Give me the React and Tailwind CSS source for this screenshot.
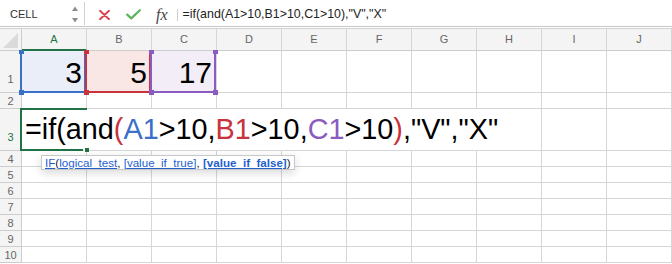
import React from 'react';

const COLS = ['A', 'B', 'C', 'D', 'E', 'F', 'G', 'H', 'I', 'J'];
const GRID = 'border-[#d6d6d6]';

function RowHeader({ n, tall, active }) {
  return (
    <div
      className={`flex w-[22px] shrink-0 justify-center border-r border-b border-[#cdcdcd] bg-[#f4f4f4] text-[11px] leading-[12px] ${
        tall ? 'items-end pb-[7px]' : 'items-center'
      } ${active ? 'text-[#217346]' : 'text-[#666]'}`}
    >
      {n}
    </div>
  );
}

function EmptyCell() {
  return <div className={`w-[65px] shrink-0 border-r border-b ${GRID}`} />;
}

function PlainRow({ n }) {
  return (
    <div className="flex h-[16px] shrink-0">
      <RowHeader n={n} />
      {COLS.map((c) => (
        <EmptyCell key={c} />
      ))}
    </div>
  );
}

/**
 * Coloured reference range on a value cell (A1 / B1 / C1)
 */
function RangeCell({ value, fill, color, rightCorners }) {
  return (
    <div
      className={`relative flex w-[65px] shrink-0 items-end justify-end border-r border-b ${GRID} ${fill} pr-[4px] pb-[4px] text-[30px] leading-none text-black`}
    >
      {value}
      {/* outline */}
      <div
        className={`pointer-events-none absolute -left-[2px] top-0 right-0 -bottom-[1px] border-x-2 border-b-2 ${color.border}`}
      />
      {/* handles */}
      <div className={`absolute -left-[3px] -top-[1px] h-[4px] w-[5px] ${color.bg}`} />
      <div className={`absolute -left-[3px] -bottom-[3px] h-[5px] w-[5px] ${color.bg}`} />
      {rightCorners && (
        <>
          <div className={`absolute -right-[2px] -top-[1px] h-[4px] w-[5px] ${color.bg}`} />
          <div className={`absolute -right-[2px] -bottom-[3px] h-[5px] w-[5px] ${color.bg}`} />
        </>
      )}
    </div>
  );
}

const BLUE = { border: 'border-[#3a70c8]', bg: 'bg-[#3a70c8]', text: 'text-[#3a70c8]' };
const RED = { border: 'border-[#c8333d]', bg: 'bg-[#c8333d]', text: 'text-[#c8333d]' };
const PURPLE = { border: 'border-[#8b5bc0]', bg: 'bg-[#8b5bc0]', text: 'text-[#8b5bc0]' };

function FormulaBar() {
  return (
    <div className="flex h-[27px] shrink-0 items-center border-b border-[#c6c6c6] bg-white pt-[3px]">
      {/* Name box */}
      <div className="flex h-full w-[85px] shrink-0 items-center justify-between border-r border-[#d2d2d2] pl-[10px] pr-[6px] -mt-[3px] pt-[3px]">
        <span className="text-[11px] text-[#333]">CELL</span>
        <svg width="6" height="17" viewBox="0 0 6 17" className="-mt-[1px]">
          <polygon points="0,5 3,0.5 6,5" fill="#8c8c8c" />
          <polygon points="0,12 3,16.5 6,12" fill="#8c8c8c" />
        </svg>
      </div>

      {/* Cancel */}
      <svg width="11" height="10" viewBox="0 0 11 10" className="ml-[14px] shrink-0">
        <path d="M1 0.8 L10 9.2 M10 0.8 L1 9.2" stroke="#d9434b" strokeWidth="1.9" strokeLinecap="round" />
      </svg>
      {/* Enter */}
      <svg width="15" height="11" viewBox="0 0 15 11" className="ml-[16px] shrink-0">
        <path d="M1.2 5.6 L5.3 9.4 L13.8 1.2" stroke="#5cb45c" strokeWidth="2.2" fill="none" strokeLinecap="round" strokeLinejoin="round" />
      </svg>
      {/* fx */}
      <span className="ml-[15px] font-['Liberation_Serif',serif] text-[16px] italic leading-none text-[#444]">
        fx
      </span>
      <div className="ml-[9px] h-[12px] w-px shrink-0 bg-[#cfcfcf]" />
      <span className="ml-[5px] whitespace-nowrap text-[12.4px] text-[#222]">
        =if(and(A1&gt;10,B1&gt;10,C1&gt;10),"V","X"
      </span>
    </div>
  );
}

function HeaderRow() {
  return (
    <div className="mt-px flex h-[23px] shrink-0 border-t border-[#d2d2d2] bg-[#f4f4f4] text-[11px]">
      <div className="relative flex w-[22px] shrink-0 items-end justify-end border-r border-b border-[#cdcdcd] pr-[3px] pb-[2px]">
        <svg width="15" height="15" viewBox="0 0 15 15">
          <polygon points="15,0 15,15 0,15" fill="#dadada" />
        </svg>
      </div>
      {COLS.map((c) =>
        c === 'A' ? (
          <div
            key={c}
            className="flex w-[65px] shrink-0 items-center justify-center border-r border-b-2 border-r-[#d6d6d6] border-b-[#217346] text-[#217346]"
          >
            {c}
          </div>
        ) : (
          <div
            key={c}
            className="flex w-[65px] shrink-0 items-center justify-center border-r border-b border-r-[#d6d6d6] border-b-[#cdcdcd] text-[#666]"
          >
            {c}
          </div>
        )
      )}
    </div>
  );
}

export default function App() {
  return (
    <div className="relative flex h-[264px] w-[672px] flex-col overflow-hidden bg-white font-['Liberation_Sans',sans-serif]">
      <FormulaBar />
      <HeaderRow />

      {/* Row 1 */}
      <div className="flex h-[42px] shrink-0">
        <RowHeader n={1} tall />
        <RangeCell value="3" fill="bg-[#e9eef9]" color={BLUE} />
        <RangeCell value="5" fill="bg-[#f9e7e6]" color={RED} />
        <RangeCell value="17" fill="bg-[#f2edf7]" color={PURPLE} rightCorners />
        {COLS.slice(3).map((c) => (
          <EmptyCell key={c} />
        ))}
      </div>

      <PlainRow n={2} />

      {/* Row 3: cell being edited, text runs over A–H */}
      <div className="flex h-[42px] shrink-0">
        <RowHeader n={3} tall active />
        <div
          className={`relative flex w-[520px] shrink-0 items-end border-r border-b ${GRID} pl-[3px] pb-[6px] text-[28.8px] leading-none whitespace-nowrap text-black`}
        >
          <span>
            =if(and<span className={RED.text}>(</span>
            <span className={BLUE.text}>A1</span>&gt;10,
            <span className={RED.text}>B1</span>&gt;10,
            <span className={PURPLE.text}>C1</span>&gt;10
            <span className={RED.text}>)</span>,"V","X"
          </span>
          {/* active cell outline */}
          <div className="pointer-events-none absolute -left-[2px] -top-[1px] -bottom-[1px] w-[67px] border-t-2 border-l-2 border-[#217346]" />
          <div className="pointer-events-none absolute -left-[2px] -bottom-[1px] h-[2px] w-[63px] bg-[#217346]" />
          <div className="pointer-events-none absolute left-[62px] -bottom-[2px] h-[4px] w-[5px] border-l border-white bg-[#217346]" />
        </div>
        <EmptyCell />
        <EmptyCell />
      </div>

      {[4, 5, 6, 7, 8, 9, 10].map((n) => (
        <PlainRow key={n} n={n} />
      ))}

      {/* Function argument tooltip */}
      <div className="absolute left-[41px] top-[155px] flex h-[15px] items-center border border-[#c8c8c8] bg-white px-[3px] text-[11.6px] leading-none whitespace-nowrap text-[#222] shadow-[0_3px_10px_rgba(0,0,0,0.15)]">
        <span className="text-[#1f5fd0] underline">IF</span>(
        <span className="text-[#1f5fd0] underline">logical_test</span>,&nbsp;
        <span className="text-[#1f5fd0] underline">[value_if_true]</span>,&nbsp;
        <span className="font-bold text-[#1f5fd0] underline">[value_if_false]</span>)
      </div>
    </div>
  );
}
